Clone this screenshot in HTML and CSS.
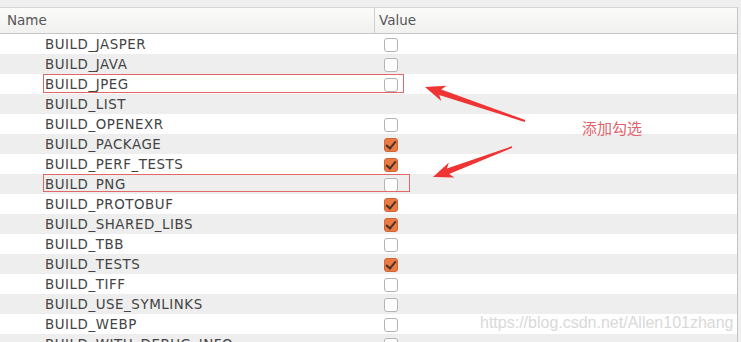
FILE: index.html
```html
<!DOCTYPE html>
<html lang="en">
<head>
    <meta charset="UTF-8">
    <meta name="viewport" content="width=device-width, initial-scale=1.0">
    <title>CMake Options</title>
    <link rel="stylesheet" href="styles.css">
</head>
<body>
    <div class="table">
        <div class="header">
            <div class="col-name">Name</div>
            <div class="col-value">Value</div>
        </div>

        <div class="row"><div class="name">BUILD_JASPER</div><div class="value"><span class="box"></span></div></div>
        <div class="row"><div class="name">BUILD_JAVA</div><div class="value"><span class="box"></span></div></div>
        <div class="row"><div class="name">BUILD_JPEG</div><div class="value"><span class="box"></span></div><span class="mark mark-jpeg"></span></div>
        <div class="row"><div class="name">BUILD_LIST</div><div class="value"></div></div>
        <div class="row"><div class="name">BUILD_OPENEXR</div><div class="value"><span class="box"></span></div></div>
        <div class="row"><div class="name">BUILD_PACKAGE</div><div class="value"><span class="box checked"></span></div></div>
        <div class="row"><div class="name">BUILD_PERF_TESTS</div><div class="value"><span class="box checked"></span></div></div>
        <div class="row"><div class="name">BUILD_PNG</div><div class="value"><span class="box"></span></div><span class="mark mark-png"></span></div>
        <div class="row"><div class="name">BUILD_PROTOBUF</div><div class="value"><span class="box checked"></span></div></div>
        <div class="row"><div class="name">BUILD_SHARED_LIBS</div><div class="value"><span class="box checked"></span></div></div>
        <div class="row"><div class="name">BUILD_TBB</div><div class="value"><span class="box"></span></div></div>
        <div class="row"><div class="name">BUILD_TESTS</div><div class="value"><span class="box checked"></span></div></div>
        <div class="row"><div class="name">BUILD_TIFF</div><div class="value"><span class="box"></span></div></div>
        <div class="row"><div class="name">BUILD_USE_SYMLINKS</div><div class="value"><span class="box"></span></div></div>
        <div class="row"><div class="name">BUILD_WEBP</div><div class="value"><span class="box"></span></div></div>
        <div class="row"><div class="name">BUILD_WITH_DEBUG_INFO</div><div class="value"><span class="box"></span></div></div>
    </div>

    <!-- annotation overlay -->
    <svg class="arrows" width="741" height="342" viewBox="0 0 741 342">
        <polygon points="425,87 446.5,85.8 441.2,89.4 525.3,120.1 524.7,121.9 439.2,95 441.3,101"/>
        <polygon points="433,177 454.5,177.4 449.1,174.1 512.3,147.7 511.7,146.3 446.9,168.5 448.9,162.4"/>
    </svg>
    <div class="callout">添加勾选</div>
    <div class="watermark">https://blog.csdn.net/Allen101zhang</div>
</body>
</html>
```

FILE: styles.css
```css
body {
    margin: 0;
    padding-top: 7px;
    background: #efefef;
    font-family: "DejaVu Sans", sans-serif;
    overflow: hidden;
    height: 342px;
    position: relative;
}

.table {
    width: 737px;
    border-right: 1px solid #c4c4c4;
    background: #ffffff;
}

.header {
    display: grid;
    grid-template-columns: 375px 1fr;
    height: 25px;
    border-top: 1px solid #d6d6d6;
    border-bottom: 1px solid #c6c6c6;
    background: linear-gradient(#fbfbfa, #f1f1f0);
    color: #555555;
    font-size: 13.5px;
    line-height: 25px;
}

.col-name {
    padding-left: 7px;
    border-right: 1px solid #cfcfcf;
}

.col-value {
    padding-left: 4px;
}

.row {
    position: relative;
    display: grid;
    grid-template-columns: 376px 1fr;
    height: 20px;
    line-height: 21px;
    background: #ffffff;
}

.row:nth-of-type(odd) {
    background: #eeeeee;
}

.name {
    padding-left: 45px;
    font-size: 13.4px;
    letter-spacing: 0.55px;
    color: #434343;
    white-space: nowrap;
}

.value {
    padding-left: 8px;
    display: flex;
    align-items: center;
}

.box {
    width: 12px;
    height: 12px;
    border: 1px solid #b3b3b3;
    border-radius: 3px;
    background: #ffffff;
    position: relative;
}

.box.checked {
    background: #ec7a45;
    border-color: #cf6435;
}

.box.checked::after {
    content: "";
    position: absolute;
    left: 3px;
    top: 0px;
    width: 4px;
    height: 8px;
    border-right: 2px solid #4c3328;
    border-bottom: 2px solid #4c3328;
    transform: rotate(40deg);
}

.mark {
    position: absolute;
    left: 43px;
    top: 0;
    border: 1px solid #e06868;
}

.mark-jpeg {
    width: 359px;
    height: 17px;
}

.mark-png {
    width: 365px;
    height: 16px;
}

.arrows {
    position: absolute;
    left: 0;
    top: 0;
}

.arrows polygon {
    fill: #f03434;
}

.callout {
    position: absolute;
    left: 582px;
    top: 117px;
    font-family: "Noto Sans CJK SC", sans-serif;
    font-size: 15px;
    color: #e2606a;
}

.watermark {
    position: absolute;
    left: 480px;
    top: 314px;
    font-family: "Liberation Sans", Arial, sans-serif;
    font-size: 16px;
    color: #d9d9d9;
}
```
